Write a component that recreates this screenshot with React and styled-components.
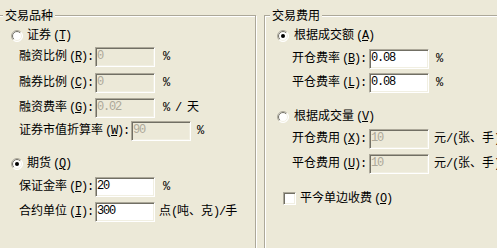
import React from 'react';
import styled, { createGlobalStyle } from 'styled-components';

const GlobalStyle = createGlobalStyle`
  html, body {
    margin: 0;
    padding: 0;
    background: #ece9d8;
  }
  body {
    font-family: "Noto Sans CJK SC", "Noto Sans", sans-serif;
    font-size: 12px;
    color: #000;
    overflow: hidden;
  }
`;

const Page = styled.div`
  display: flex;
  width: 497px;
  height: 248px;
  padding-top: 15px;
  box-sizing: border-box;
  overflow: hidden;
`;

const Group = styled.section`
  position: relative;
  flex: none;
  display: flex;
  flex-direction: column;
  box-sizing: border-box;
  width: 260px;
  height: 260px;
  margin-left: ${p => p.$offset}px;
  border: 1px solid #aca899;
  box-shadow: inset 1px 1px 0 #fff, 1px 1px 0 #fff;
`;

const Title = styled.span`
  position: absolute;
  top: -8px;
  left: ${p => p.$left}px;
  padding: 0 2px;
  background: #ece9d8;
  font-size: 12px;
  line-height: 14px;
  white-space: nowrap;
`;

const OptionRow = styled.label`
  display: flex;
  align-items: center;
  height: 13px;
  margin-top: ${p => p.$top}px;
  margin-left: ${p => p.$indent}px;
  white-space: nowrap;
`;

const OptionText = styled.span`
  margin-left: ${p => p.$gap}px;
  line-height: 13px;
  padding-bottom: 1px;
`;

const FieldRow = styled.div`
  display: flex;
  align-items: center;
  height: 20px;
  margin-top: ${p => p.$top}px;
  margin-left: ${p => p.$indent}px;
  white-space: nowrap;
`;

const Label = styled.span`
  margin-right: ${p => p.$gap}px;
  line-height: 14px;
  padding-bottom: 2px;
`;

const Key = styled.span`
  font-family: "Liberation Mono", monospace;
  font-size: 12px;
  letter-spacing: -1.2px;
  margin-left: 2px;

  u {
    text-decoration: underline;
    text-underline-offset: 1px;
  }
`;

const Mono = styled.span`
  font-family: "Liberation Mono", monospace;
  font-size: 12px;
  letter-spacing: -1.2px;
`;

const Input = styled.input`
  box-sizing: border-box;
  width: 60px;
  height: 20px;
  margin: 0;
  padding: 0 0 3px 1px;
  border: 1px solid;
  border-color: #aca899 #fff #fff #aca899;
  box-shadow: inset 1px 1px 0 #716f64, inset -1px -1px 0 #f1efe2;
  background: ${p => (p.disabled ? '#ece9d8' : '#fff')};
  color: #000;
  font-family: "Liberation Mono", monospace;
  font-size: 12px;
  letter-spacing: -1.2px;
  outline: none;

  &:disabled {
    color: #aca899;
    -webkit-text-fill-color: #aca899;
  }
`;

const Unit = styled.span`
  margin-left: ${p => p.$gap}px;
  line-height: 14px;
  padding-bottom: 2px;
`;

const Box = styled.span`
  box-sizing: border-box;
  width: 13px;
  height: 13px;
  border: 1px solid;
  border-color: #aca899 #fff #fff #aca899;
  box-shadow: inset 1px 1px 0 #716f64, inset -1px -1px 0 #f1efe2;
  background: #fff;
  flex: none;
`;

function Radio({ checked }) {
  return (
    <svg width="12" height="12" viewBox="0 0 12 12">
      <defs>
        <linearGradient id="rOuter" x1="0" y1="0" x2="1" y2="1">
          <stop offset="0.45" stopColor="#aca899" />
          <stop offset="0.55" stopColor="#ffffff" />
        </linearGradient>
        <linearGradient id="rInner" x1="0" y1="0" x2="1" y2="1">
          <stop offset="0.45" stopColor="#716f64" />
          <stop offset="0.55" stopColor="#f1efe2" />
        </linearGradient>
      </defs>
      <circle cx="6" cy="6" r="5.5" fill="#fff" stroke="url(#rOuter)" />
      <circle cx="6" cy="6" r="4.5" fill="#fff" stroke="url(#rInner)" />
      {checked && <circle cx="6" cy="6" r="2" fill="#000" />}
    </svg>
  );
}

function Field({ top, indent, gap = 2, name, hotkey, value, disabled, unit, unitGap }) {
  return (
    <FieldRow $top={top} $indent={indent}>
      <Label $gap={gap}>
        {name}
        <Key>(<u>{hotkey}</u>):</Key>
      </Label>
      <Input defaultValue={value} disabled={disabled} />
      <Unit $gap={unitGap}>{unit}</Unit>
    </FieldRow>
  );
}

export default function App() {
  return (
    <>
      <GlobalStyle />
      <Page>
        <Group $offset={-4}>
          <Title $left={6}>交易品种</Title>
          <OptionRow $top={13} $indent={14}>
            <Radio />
            <OptionText $gap={4}>证券<Key>(<u>T</u>)</Key></OptionText>
          </OptionRow>
          <Field top={5} indent={22} name="融资比例" hotkey="R" value="0" disabled unit={<Mono>%</Mono>} unitGap={8} />
          <Field top={6} indent={22} name="融券比例" hotkey="C" value="0" disabled unit={<Mono>%</Mono>} unitGap={8} />
          <Field
            top={5}
            indent={22}
            name="融资费率"
            hotkey="G"
            value="0.02"
            disabled
            unit={<><Mono>% / </Mono>天</>}
            unitGap={8}
          />
          <Field top={3} indent={22} name="证券市值折算率" hotkey="W" value="90" disabled unit={<Mono>%</Mono>} unitGap={6} />
          <OptionRow $top={16} $indent={14}>
            <Radio checked />
            <OptionText $gap={4}>期货<Key>(<u>Q</u>)</Key></OptionText>
          </OptionRow>
          <Field top={7} indent={22} name="保证金率" hotkey="P" value="20" unit={<Mono>%</Mono>} unitGap={8} />
          <Field
            top={5}
            indent={22}
            name="合约单位"
            hotkey="I"
            value="300"
            unit={<>点<Mono>(</Mono>吨、克<Mono>)/</Mono>手</>}
            unitGap={4}
          />
        </Group>

        <Group $offset={8}>
          <Title $left={5}>交易费用</Title>
          <OptionRow $top={13} $indent={12}>
            <Radio checked />
            <OptionText $gap={5}>根据成交额<Key>(<u>A</u>)</Key></OptionText>
          </OptionRow>
          <Field top={7} indent={27} gap={3} name="开仓费率" hotkey="B" value="0.08" unit={<Mono>%</Mono>} unitGap={7} />
          <Field top={4} indent={27} gap={3} name="平仓费率" hotkey="L" value="0.08" unit={<Mono>%</Mono>} unitGap={7} />
          <OptionRow $top={17} $indent={12}>
            <Radio />
            <OptionText $gap={5}>根据成交量<Key>(<u>V</u>)</Key></OptionText>
          </OptionRow>
          <Field
            top={6}
            indent={27}
            gap={3}
            name="开仓费用"
            hotkey="X"
            value="10"
            disabled
            unit={<>元<Mono>/(</Mono>张、手<Mono>)</Mono></>}
            unitGap={5}
          />
          <Field
            top={5}
            indent={27}
            gap={3}
            name="平仓费用"
            hotkey="U"
            value="10"
            disabled
            unit={<>元<Mono>/(</Mono>张、手<Mono>)</Mono></>}
            unitGap={5}
          />
          <OptionRow $top={18} $indent={18}>
            <Box />
            <OptionText $gap={4}>平今单边收费<Key>(<u>O</u>)</Key></OptionText>
          </OptionRow>
        </Group>
      </Page>
    </>
  );
}
